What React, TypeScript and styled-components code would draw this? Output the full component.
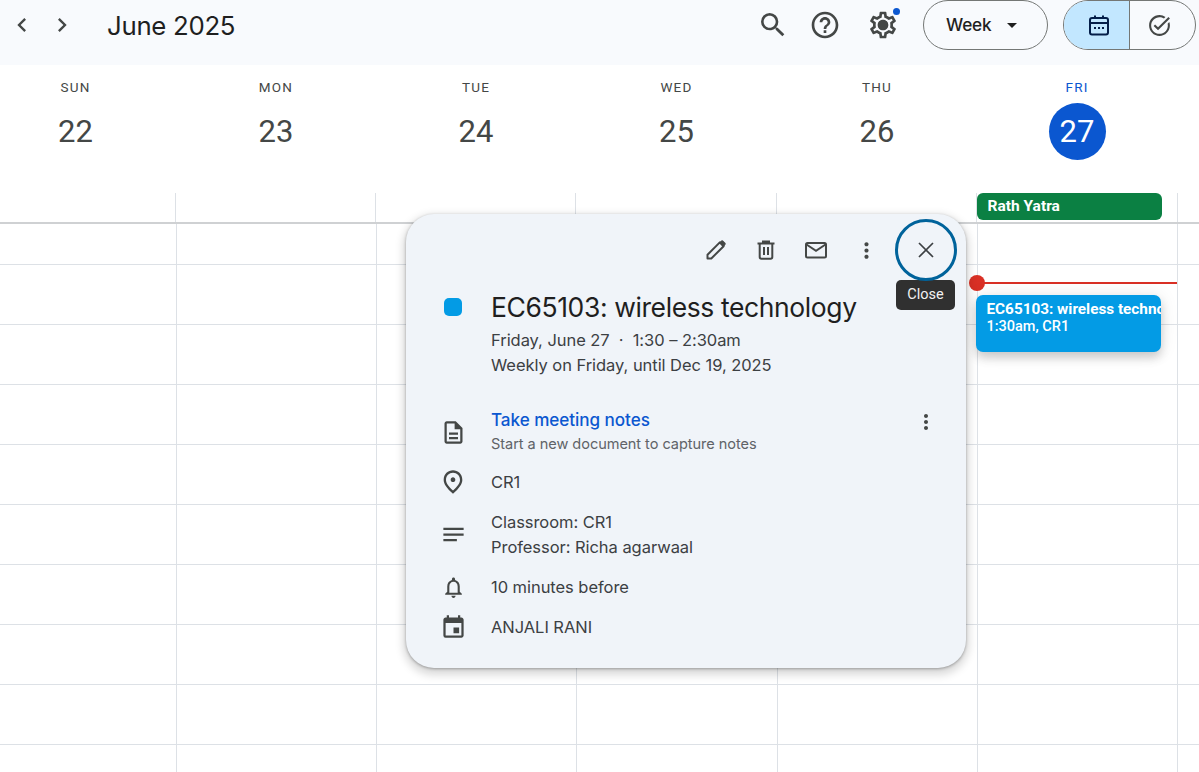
import React from "react";
import styled, { createGlobalStyle } from "styled-components";
import {
  MdChevronLeft, MdChevronRight, MdSearch, MdHelpOutline, MdOutlineSettings, MdArrowDropDown,
  MdOutlineTaskAlt, MdMoreVert, MdOutlineDescription, MdOutlinePlace, MdNotes, MdOutlineNotifications, MdEvent,
} from "react-icons/md";

const Global = createGlobalStyle`
  html, body { margin: 0; padding: 0; background: #fff; }
  body { font-family: Roboto, "Liberation Sans", sans-serif; }
  *, *::before, *::after { box-sizing: border-box; }
`;

const Page = styled.div`
  position: relative; width: 1199px; height: 772px; overflow: hidden; background: #fff;
`;
const TopBar = styled.header`
  height: 65px; background: #f8fafd; display: flex; align-items: flex-start; padding-right: 3px;
`;
const NavButton = styled.button`
  width: 40px; height: 50px; border: 0; background: none; padding: 0; display: flex;
  align-items: center; justify-content: center; color: #444746; font-size: 28px;
`;
const NavGroup = styled.div`
  display: flex; margin-left: 2px;
`;
const MonthTitle = styled.h1`
  margin: 0 0 0 25px; font: 400 25.8px/51px Inter, sans-serif; letter-spacing: -0.3px; color: #1f1f1f; flex: 1;
`;
const ToolIcon = styled.span<{ $gap: number }>`
  position: relative; width: 32px; height: 50px; display: flex; align-items: center; justify-content: center;
  color: #444746; font-size: 32px; margin-right: ${(p) => p.$gap}px;
`;
const GearDot = styled.i`
  position: absolute; top: 8px; right: -1px; width: 7px; height: 7px; border-radius: 50%; background: #0b57d0;
`;
const GearCore = styled.i`
  position: absolute; left: 11px; top: 20px; width: 10px; height: 10px; border-radius: 50%; background: #444746;
`;
const ViewPill = styled.div`
  width: 125px; height: 50px; border: 1px solid #747775; border-radius: 25px; display: flex; align-items: center;
  padding: 0 0 1px 22px; font: 500 17.2px Inter, sans-serif; letter-spacing: -0.2px; color: #1f1f1f; margin-right: 15px; gap: 9px;
  svg { font-size: 24px; color: #1f1f1f; }
`;
const Segment = styled.div`
  width: 133px; height: 50px; border: 1px solid #747775; border-radius: 25px; display: flex; overflow: hidden;
`;
const SegmentCell = styled.div<{ $on?: boolean }>`
  flex: ${(p) => (p.$on ? "0 0 65px" : "1")}; display: flex; align-items: center; justify-content: center; font-size: 25px;
  padding: ${(p) => (p.$on ? "0 0 0 4px" : "0 7px 0 0")};
  background: ${(p) => (p.$on ? "#c2e7ff" : "transparent")};
  color: ${(p) => (p.$on ? "#041e49" : "#444746")};
  & + & { border-left: 1px solid #747775; }
`;
const DayHeader = styled.div`
  display: grid; grid-template-columns: 201px 200px 200px 201px 200px 200px; margin-left: -25px; height: 128px;
`;
const DayCol = styled.div<{ $today?: boolean }>`
  display: flex; flex-direction: column; align-items: center; padding-top: 13px;
  color: ${(p) => (p.$today ? "#0b57d0" : "#444746")};
`;
const DayName = styled.div`
  font: 400 13.5px/18px Roboto, sans-serif; letter-spacing: 1.2px; height: 25px;
`;
const DayNum = styled.div<{ $today?: boolean }>`
  width: 57px; height: 57px; border-radius: 50%; display: flex; align-items: center; justify-content: center;
  font: 400 31px/57px Roboto, sans-serif;
  background: ${(p) => (p.$today ? "#0b57d0" : "transparent")};
  color: ${(p) => (p.$today ? "#fff" : "#444746")};
`;
const AllDayRow = styled.div`
  display: grid; grid-template-columns: 201px 200px 200px 201px 200px 201px 1fr; margin-left: -25px; height: 31px;
  border-bottom: 2px solid #cfd1d3;
`;
const AllDayCell = styled.div`
  border-right: 1px solid #dde1e6;
`;
const Holiday = styled.div`
  width: 185px; height: 27px; border-radius: 6px; background: #0b8043; color: #fff;
  font: 700 15.5px/26px Roboto, sans-serif; padding-left: 10.5px;
`;
const HourRow = styled.div<{ $first?: boolean }>`
  display: grid; grid-template-columns: 202px 200px 200px 201px 200px 200px 1fr; margin-left: -25px;
  height: ${(p) => (p.$first ? 41 : 60)}px; border-bottom: 1px solid #dde1e6;
`;
const HourCell = styled.div`
  border-right: 1px solid #dde1e6;
`;
const NowLine = styled.div`
  position: absolute; left: 977px; top: 282px; width: 200px; height: 2px; background: #d93025;
  &::before { content: ""; position: absolute; left: -8px; top: -7px; width: 16px; height: 16px; border-radius: 50%; background: #d93025; }
`;
const EventChip = styled.div`
  position: absolute; left: 976px; top: 295px; width: 185px; height: 57px; border-radius: 7px; background: #039be5; color: #fff;
  padding: 5px 0 0 10.5px; box-shadow: 0 6px 10px rgba(0,0,0,.16), 0 1px 18px rgba(0,0,0,.1); overflow: hidden;
  font: 500 14.5px/18px Roboto, sans-serif; white-space: nowrap;
`;
const ChipTitle = styled.div`
  font-weight: 700; font-size: 15.3px;
`;
const Popup = styled.section`
  position: absolute; left: 406px; top: 214px; width: 560px; height: 454px; border-radius: 28px; background: #f0f4f9;
  box-shadow: 0 4px 8px 3px rgba(0,0,0,.15), 0 1px 3px rgba(0,0,0,.3); padding: 11px 15px 0 0;
  font: 400 16.5px/25px Inter, sans-serif; letter-spacing: -0.05px; color: #3c4043;
`;
const Toolbar = styled.div`
  display: flex; justify-content: flex-end; height: 50px;
`;
const IconBtn = styled.span`
  position: relative; width: 50px; height: 50px; display: flex; align-items: center; justify-content: center;
  color: #444746; font-size: 25px;
`;
const CloseBtn = styled(IconBtn)`
  margin-left: 10px; color: #3c4043;
  &::after { content: ""; position: absolute; left: -6px; top: -6px; width: 62px; height: 62px; border: 3.5px solid #00639b; border-radius: 50%; }
`;
const Tooltip = styled.div`
  position: absolute; left: -5px; top: 55px; width: 59px; height: 30px; border-radius: 5px; background: #303030; color: #f2f2f2;
  font: 400 14.5px/30px Roboto, sans-serif; letter-spacing: 0; text-align: center;
`;
const InfoRow = styled.div<{ $gap?: number }>`
  display: grid; grid-template-columns: 85px 1fr 50px; margin-top: ${(p) => p.$gap ?? 15}px;
`;
const RowIcon = styled.div<{ $size?: number; $drop?: number }>`
  display: flex; align-items: center; justify-content: center; width: 30px; height: 25px; margin-left: 32px; align-self: center;
  color: #444746; font-size: ${(p) => p.$size ?? 27}px; padding-top: ${(p) => p.$drop ?? 0}px;
`;
const ColorDot = styled.div`
  width: 18px; height: 18px; border-radius: 5px; background: #039be5; margin: 10px 0 0 38px;
`;
const EventTitle = styled.h2`
  margin: 0; padding-bottom: 2px; font: 400 26.5px/38px Inter, sans-serif; letter-spacing: -0.4px; color: #1f1f1f; white-space: nowrap;
`;
const Link = styled.div`
  color: #0b57d0; font-weight: 500; font-size: 17.1px;
`;
const Sub = styled.div`
  font-size: 14.55px; line-height: 20px; margin-top: 1.5px; color: #5f6368;
`;
const RowAction = styled.div`
  display: flex; justify-content: center; font-size: 24px; color: #444746; padding-top: 3px; height: 25px;
`;

const Pencil = () => (
  <svg width="24" height="24" viewBox="0 0 24 24" fill="none" stroke="currentColor" strokeWidth="2" strokeLinejoin="round">
    <path d="M3.5 20.5v-3.8L15.8 4.4l3.8 3.8L7.3 20.5z" />
    <path d="M15.5 4.7l1.3-1.3a1.9 1.9 0 0 1 2.7 0l1.1 1.1a1.9 1.9 0 0 1 0 2.7l-1.3 1.3z" fill="currentColor" strokeWidth="1" />
  </svg>
);
const Trash = () => (
  <svg width="24" height="24" viewBox="0 0 24 24" fill="none" stroke="currentColor" strokeWidth="2">
    <path d="M3.5 5.5h17M9 5V3.5h6V5" />
    <path d="M5.7 5.5V19a1.7 1.7 0 0 0 1.7 1.7h9.2a1.7 1.7 0 0 0 1.7-1.7V5.5" />
    <path d="M10 9v8M14 9v8" />
  </svg>
);
const Mail = () => (
  <svg width="24" height="24" viewBox="0 0 24 24" fill="none" stroke="currentColor" strokeWidth="2">
    <rect x="2" y="5" width="20" height="14.5" rx="1.5" />
    <path d="M2.5 6.5l9.5 6.3 9.5-6.3" />
  </svg>
);
const CloseX = () => (
  <svg width="24" height="24" viewBox="0 0 24 24" fill="none" stroke="currentColor" strokeWidth="1.7">
    <path d="M5 5l14 14M19 5L5 19" />
  </svg>
);
const CalendarNav = () => (
  <svg width="24" height="24" viewBox="0 0 24 24" fill="none" stroke="currentColor" strokeWidth="2">
    <rect x="3" y="5" width="18" height="16.5" rx="2" />
    <path d="M3 10h18M8 2.5V6M16 2.5V6" />
    <path d="M7 15h2M11 15h2M15 15h2" strokeWidth="1.8" />
  </svg>
);

const days = [["SUN", 22], ["MON", 23], ["TUE", 24], ["WED", 25], ["THU", 26], ["FRI", 27]] as const;

export default function App() {
  return (
    <Page>
      <Global />
      <TopBar>
        <NavGroup>
          <NavButton><MdChevronLeft /></NavButton>
          <NavButton><MdChevronRight /></NavButton>
        </NavGroup>
        <MonthTitle>June 2025</MonthTitle>
        <ToolIcon $gap={20}><MdSearch /></ToolIcon>
        <ToolIcon $gap={26}><MdHelpOutline /></ToolIcon>
        <ToolIcon $gap={24}><MdOutlineSettings /><GearCore /><GearDot /></ToolIcon>
        <ViewPill>Week <MdArrowDropDown /></ViewPill>
        <Segment>
          <SegmentCell $on><CalendarNav /></SegmentCell>
          <SegmentCell><MdOutlineTaskAlt /></SegmentCell>
        </Segment>
      </TopBar>
      <DayHeader>
        {days.map(([n, d]) => (
          <DayCol key={n} $today={d === 27}>
            <DayName>{n}</DayName>
            <DayNum $today={d === 27}>{d}</DayNum>
          </DayCol>
        ))}
      </DayHeader>
      <AllDayRow>
        {[0, 1, 2, 3, 4].map((i) => <AllDayCell key={i} />)}
        <AllDayCell><Holiday>Rath Yatra</Holiday></AllDayCell>
      </AllDayRow>
      {Array.from({ length: 10 }).map((_, r) => (
        <HourRow key={r} $first={r === 0}>
          {[0, 1, 2, 3, 4, 5].map((c) => <HourCell key={c} />)}
        </HourRow>
      ))}
      <NowLine />
      <EventChip>
        <ChipTitle>EC65103: wireless technology</ChipTitle>
        1:30am, CR1
      </EventChip>
      <Popup>
        <Toolbar>
          <IconBtn><Pencil /></IconBtn>
          <IconBtn><Trash /></IconBtn>
          <IconBtn><Mail /></IconBtn>
          <IconBtn><MdMoreVert /></IconBtn>
          <CloseBtn><CloseX /><Tooltip>Close</Tooltip></CloseBtn>
        </Toolbar>
        <InfoRow $gap={13}>
          <ColorDot />
          <div>
            <EventTitle>EC65103: wireless technology</EventTitle>
            <div>Friday, June 27 &nbsp;·&nbsp; 1:30 – 2:30am</div>
            <div>Weekly on Friday, until Dec 19, 2025</div>
          </div>
        </InfoRow>
        <InfoRow $gap={29}>
          <RowIcon $drop={4}><MdOutlineDescription /></RowIcon>
          <div>
            <Link>Take meeting notes</Link>
            <Sub>Start a new document to capture notes</Sub>
          </div>
          <RowAction><MdMoreVert /></RowAction>
        </InfoRow>
        <InfoRow $gap={16}>
          <RowIcon $size={28}><MdOutlinePlace /></RowIcon>
          <div>CR1</div>
        </InfoRow>
        <InfoRow>
          <RowIcon><MdNotes /></RowIcon>
          <div>Classroom: CR1<br />Professor: Richa agarwaal</div>
        </InfoRow>
        <InfoRow>
          <RowIcon $size={25}><MdOutlineNotifications /></RowIcon>
          <div>10 minutes before</div>
        </InfoRow>
        <InfoRow>
          <RowIcon><MdEvent /></RowIcon>
          <div>ANJALI RANI</div>
        </InfoRow>
      </Popup>
    </Page>
  );
}
